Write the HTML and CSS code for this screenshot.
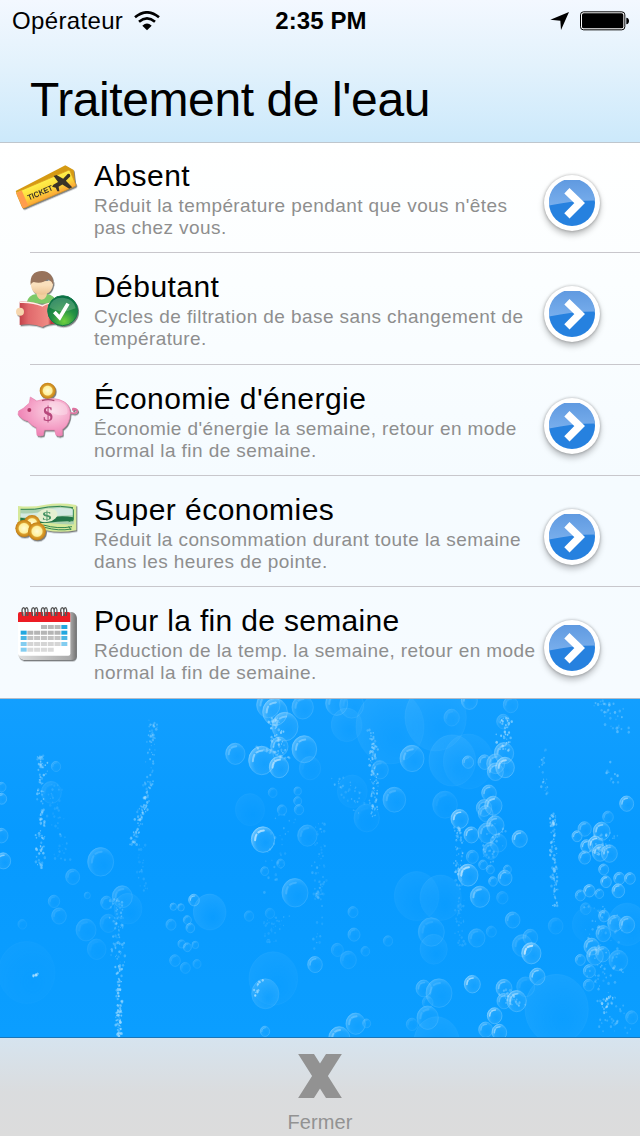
FILE: index.html
```html
<!DOCTYPE html>
<html lang="fr">
<head>
<meta charset="utf-8">
<title>Traitement de l'eau</title>
<link rel="stylesheet" href="styles.css">
</head>
<body>
<div class="screen">
  <header class="header">
    <div class="status">
      <div class="status-left">
        <span class="carrier">Opérateur</span>
        <svg class="wifi" width="26" height="20" viewBox="0 0 78 60">
          <path d="M3 19Q39-11 75 19" fill="none" stroke="#000" stroke-width="8"/>
          <path d="M15 32Q39 12 63 32" fill="none" stroke="#000" stroke-width="8"/>
          <path d="M25 44Q39 31 53 44L39 58Z"/>
        </svg>
      </div>
      <span class="clock">2:35 PM</span>
      <div class="status-right">
        <svg width="20" height="20" viewBox="0 0 60 60"><path d="M1 26L57 3L33 57L31 29Z"/></svg>
        <svg width="50" height="20" viewBox="0 0 150 60">
          <rect x="1.5" y="2.500" width="133" height="54" rx="9" fill="#fff" stroke="#000" stroke-width="3"/>
          <rect x="6" y="7" width="124" height="45" rx="5"/>
          <path d="M139 20Q147 21 147 30Q147 39 139 40Z"/>
        </svg>
      </div>
    </div>
    <h1 class="title">Traitement de l'eau</h1>
  </header>

  <main class="list">
    <section class="row row-first">
      <svg class="icon" viewBox="0 -6 282 330">
        <defs>
          <linearGradient id="gold" x1="0" x2="0" y1="0" y2="1"><stop offset="0" stop-color="#fff04c"/><stop offset=".55" stop-color="#fbd938"/><stop offset="1" stop-color="#fda438"/></linearGradient>
        </defs>
        <g class="shade">
          <path d="M47 138L196 61L221 75L225 110L72 190Z" fill="#d59a13"/>
          <g transform="rotate(-23 140 133)">
            <rect x="52" y="106" width="174" height="52" rx="4" fill="url(#gold)" stroke="#d99a1c" stroke-width="2"/>
            <path d="M52 107H70V157H52Z" fill="#ff9d4d"/>
            <text x="78" y="143" class="ticket-text" textLength="80" lengthAdjust="spacingAndGlyphs">TICKET</text>
            <path d="M164 128L180 126L175 104L184 105L198 123L216 115Q225 117 220 125L203 132L213 157L203 158L189 138L176 140L173 153L167 151L167 139L158 132Z" fill="#3b3327"/>
          </g>
        </g>
      </svg>
      <div class="copy"><h2>Absent</h2><p>Réduit la température pendant que vous n'êtes<br>pas chez vous.</p></div>
      <div class="go"><svg viewBox="0 0 45 45"><use href="#arrow"/></svg></div>
    </section>

    <section class="row row-tall">
      <svg class="icon" viewBox="0 -6 282 330">
        <defs>
          <radialGradient id="green" cx=".55" cy=".85" r=".8"><stop offset="0" stop-color="#6ed13f"/><stop offset=".5" stop-color="#249043"/><stop offset="1" stop-color="#087044"/></radialGradient>
          <linearGradient id="face" x1="0" x2="0" y1="0" y2="1"><stop offset=".3" stop-color="#fae0bd"/><stop offset="1" stop-color="#edc391"/></linearGradient>
          <linearGradient id="book"><stop offset="0" stop-color="#c34249"/><stop offset=".2" stop-color="#e0696c"/><stop offset=".65" stop-color="#f08b84"/><stop offset=".72" stop-color="#b8363f"/><stop offset="1" stop-color="#df6267"/></linearGradient>
        </defs>
        <g class="shade">
          <path d="M79 145Q84 119 110 117H140Q166 120 171 147Z" fill="#7dc968"/>
          <path d="M109 110H141Q142 131 125 134Q109 131 109 110Z" fill="#f2d0a0"/>
          <path d="M92 79Q91 119 124 119Q160 119 160 78Z" fill="url(#face)"/>
          <path d="M92 90Q88 49 126 48Q161 49 160 91Q155 78 144 72Q126 88 101 81Q94 82 92 90Z" fill="#98735b"/>
          <path d="M59 140Q99 138 126 152Q145 139 190 143V208Q150 203 127 216Q98 203 59 210Z" fill="url(#book)"/>
          <path d="M59 142Q98 140 127 153Q145 141 180 143" fill="none" stroke="#fff0eb" stroke-width="4"/>
          <circle cx="60" cy="170" r="12" fill="#f6d6ae"/>
          <circle cx="188" cy="167" r="45" fill="url(#green)" stroke="#147a4b" stroke-width="3"/>
          <path d="M148 157Q155 126 190 128Q224 133 227 160Q182 180 148 157Z" fill="#fff" opacity=".2"/>
          <path d="M163 171L179 188L204 146" fill="none" stroke="#fff" stroke-width="11"/>
        </g>
      </svg>
      <div class="copy"><h2>Débutant</h2><p>Cycles de filtration de base sans changement de<br>température.</p></div>
      <div class="go"><svg viewBox="0 0 45 45"><use href="#arrow"/></svg></div>
    </section>

    <section class="row">
      <svg class="icon" viewBox="0 0 282 330">
        <defs>
          <radialGradient id="pink" cx=".65" cy=".35" r=".65"><stop offset="0" stop-color="#fad6e5"/><stop offset=".6" stop-color="#f5a5c9"/><stop offset="1" stop-color="#ef83b5"/></radialGradient>
          <radialGradient id="coin"><stop offset="0" stop-color="#fffbd5"/><stop offset=".55" stop-color="#fff09c"/><stop offset=".68" stop-color="#dba02e"/><stop offset="1" stop-color="#c47e13"/></radialGradient>
        </defs>
        <g class="shade">
          <path d="M205 142Q229 150 232 139Q232 130 219 131Q217 136 223 137" fill="none" stroke="#df719f" stroke-width="5"/>
          <path d="M91 96L110 108Q163 92 194 111Q216 128 209 159Q203 184 187 193V211Q178 216 168 211L164 195H133L130 211Q120 215 111 211L109 188Q93 181 83 168Q65 164 54 149L56 138L70 130L88 114Z" fill="url(#pink)" stroke="#e986b0" stroke-width="2"/>
          <path d="M148 111Q174 104 195 119Q207 133 201 147Q174 158 148 137Z" fill="#fff" opacity=".28"/>
          <path d="M126 107Q144 101 163 107" stroke="#a7496f" stroke-width="4" fill="none"/>
          <circle cx="88" cy="135" r="6" fill="#b13764"/>
          <text x="129" y="168" class="pig-sign">$</text>
          <circle cx="143" cy="77" r="24" fill="url(#coin)"/>
        </g>
      </svg>
      <div class="copy"><h2>Économie d'énergie</h2><p>Économie d'énergie la semaine, retour en mode<br>normal la fin de semaine.</p></div>
      <div class="go"><svg viewBox="0 0 45 45"><use href="#arrow"/></svg></div>
    </section>

    <section class="row">
      <svg class="icon" viewBox="0 3 282 330">
        <g class="shade">
          <path d="M54 93Q95 98 136 89Q180 82 229 90V166Q179 175 137 166Q96 158 54 164Z" fill="#d6e99b"/>
          <path d="M61 101Q103 104 142 94Q181 88 219 96L222 148Q183 149 145 143Q101 132 61 143Z" fill="#acd1b0"/>
          <path d="M62 115Q107 119 150 101Q188 96 220 103V121Q180 119 145 128Q106 132 62 126Z" fill="#d4e9e1"/>
          <path d="M61 128Q104 136 144 129Q182 120 220 127V139Q180 137 145 143Q105 146 61 139Z" fill="#237547"/>
          <path d="M62 103Q105 106 145 96Q180 91 219 98M130 150Q174 163 216 155M134 157Q176 169 214 162M206 154L213 165M213 97L220 104V134L206 140" fill="none" stroke="#338650" stroke-width="3"/>
          <ellipse cx="141" cy="121" rx="32" ry="20" transform="rotate(-12 141 121)" fill="#e4f0d0"/>
          <text x="127" y="134" class="note-sign" textLength="28" lengthAdjust="spacingAndGlyphs">$</text>
          <circle cx="96" cy="145" r="25" fill="url(#coin)"/>
          <circle cx="72" cy="160" r="26" fill="url(#coin)"/>
          <circle cx="111" cy="169" r="27" fill="url(#coin)"/>
        </g>
      </svg>
      <div class="copy"><h2>Super économies</h2><p>Réduit la consommation durant toute la semaine<br>dans les heures de pointe.</p></div>
      <div class="go"><svg viewBox="0 0 45 45"><use href="#arrow"/></svg></div>
    </section>

    <section class="row row-last">
      <svg class="icon" viewBox="0 -3 282 330">
        <defs><linearGradient id="pad"><stop offset="0" stop-color="#ddd"/><stop offset=".9" stop-color="#aaa"/><stop offset="1" stop-color="#777"/></linearGradient></defs>
        <g class="shade">
          <path d="M55 94L215 72Q227 74 228 86V203Q227 215 214 216H70Q54 211 54 197Z" fill="url(#pad)"/>
          <rect x="54" y="72" width="157" height="131" rx="6" fill="#fff"/>
          <path d="M54 102V78Q54 72 60 72H205Q211 72 211 78V102Z" fill="#ec1c24"/>
        </g>
        <g fill="none" stroke="#fff" stroke-width="7">
          <path d="M74 64V84M103 64V84M132 64V84M161 64V84M190 64V84"/>
        </g>
        <g fill="none" stroke="#555" stroke-width="4">
          <path d="M69 84Q62 61 71 59Q77 60 75 84M78 84Q72 61 80 59Q86 60 83 84"/>
          <path d="M98 84Q91 61 100 59Q106 60 104 84M107 84Q101 61 109 59Q115 60 112 84"/>
          <path d="M127 84Q120 61 129 59Q135 60 133 84M136 84Q130 61 138 59Q144 60 141 84"/>
          <path d="M156 84Q149 61 158 59Q164 60 162 84M165 84Q159 61 167 59Q173 60 170 84"/>
          <path d="M185 84Q178 61 187 59Q193 60 191 84M194 84Q188 61 196 59Q202 60 199 84"/>
        </g>
        <g fill="none" stroke-width="12" stroke-dasharray="18 2.400">
          <path d="M123 117H183" stroke="#b9b9b9"/><path d="M184 117H202" stroke="#22a7df"/>
          <path d="M62 134H81" stroke="#22a7df"/><path d="M82 134H183" stroke="#b5b5b5"/><path d="M184 134H202" stroke="#22a7df"/>
          <path d="M62 150H81" stroke="#4ab6e4"/><path d="M82 150H183" stroke="#c2c2c2"/><path d="M184 150H202" stroke="#4ab6e4"/>
          <path d="M62 168H81" stroke="#83cdf0"/><path d="M82 168H183" stroke="#d5d5d5"/><path d="M184 168H202" stroke="#83cdf0"/>
          <path d="M62 185H81" stroke="#83cdf0"/><path d="M82 185H162" stroke="#dadada"/>
        </g>
      </svg>
      <div class="copy"><h2>Pour la fin de semaine</h2><p>Réduction de la temp. la semaine, retour en mode<br>normal la fin de semaine.</p></div>
      <div class="go"><svg viewBox="0 0 45 45"><use href="#arrow"/></svg></div>
    </section>
  </main>

  <svg class="water" viewBox="0 27 1920 1017" preserveAspectRatio="none">
    <defs>
      <radialGradient id="bubble" cx=".62" cy=".62" r=".66">
        <stop offset="0" stop-color="#6fc6ff" stop-opacity=".12"/>
        <stop offset=".6" stop-color="#7accff" stop-opacity=".25"/>
        <stop offset="1" stop-color="#b5e4ff" stop-opacity=".75"/>
      </radialGradient>
      <radialGradient id="haze" cx=".6" cy=".65" r=".7">
        <stop offset="0" stop-color="#58bcff" stop-opacity=".1"/>
        <stop offset="1" stop-color="#7accff" stop-opacity=".6"/>
      </radialGradient>
      <linearGradient id="rim" x1="0" y1="0" x2="1" y2="1">
        <stop offset="0" stop-color="#c9ebff"/>
        <stop offset=".5" stop-color="#8fd4ff" stop-opacity=".25"/>
        <stop offset="1" stop-color="#a8deff" stop-opacity=".65"/>
      </linearGradient>
      <linearGradient id="gloss" x1="0" x2="0" y1="0" y2="1"><stop offset="0" stop-color="#5f99e0"/><stop offset="1" stop-color="#78aeec"/></linearGradient>
      <g id="arrow">
        <circle cx="22.500" cy="22.500" r="22.500" fill="#2681df"/>
        <path d="M0 22.500A22.500 22.500 0 0 1 45 20Q22 20 0 25Z" fill="url(#gloss)"/>
        <path d="M17.500 10.500L30 22.500L17.500 35" fill="none" stroke="#fff" stroke-width="7.300"/>
      </g>
    </defs>
    <g id="bubbles"></g>
  </svg>

  <footer class="toolbar">
    <svg class="close" viewBox="0 0 46 46"><path d="M4-7L42 53M42-7L4 53" stroke="#929292" stroke-width="14"/></svg>
    <span>Fermer</span>
  </footer>
</div>
<script src="bubbles.js"></script>
</body>
</html>
```
FILE: styles.css
```css
* { box-sizing: border-box; }
body { margin: 0; font-family: "Liberation Sans", Arial, sans-serif; color: #000; }
svg { display: block; flex: none; }
.screen { width: 640px; height: 1136px; display: flex; flex-direction: column; overflow: hidden; background: #089bff; }
.header { height: 143px; border-bottom: 1px solid #bfc6cd; background: linear-gradient(#f3f8ff, #e3f2fc 45%, #cce9fb); }
.status { height: 40px; display: grid; grid-template-columns: 1fr auto 1fr; align-items: center; padding: 2px 10px 0 12px; font-size: 24px; line-height: 38px; }
.status-left { display: flex; align-items: center; gap: 11px; }
.carrier { letter-spacing: .35px; }
.wifi { margin-bottom: 1px; }
.clock { font-weight: bold; font-size: 24px; letter-spacing: .1px; }
.status-right { display: flex; justify-content: flex-end; align-items: center; gap: 10px; }
.title { margin: 0; padding: 32px 0 0 30px; font-size: 48px; line-height: 56px; font-weight: normal; letter-spacing: -.4px; }
.list { background: linear-gradient(#fff, #fbfeff 25%, #f5fbff 60%, #f6fbff); }
.row { height: 111px; display: flex; background: linear-gradient(#c8c7cc, #c8c7cc) 30px 100% / 610px 1px no-repeat; }
.row-first { height: 110px; }
.row-tall { height: 112px; }
.row-last { height: 112px; background: none; border-bottom: 1px solid #b4bcc8; }
.icon { width: 94px; height: 110px; }
.shade { filter: drop-shadow(3px 4px 2px rgba(0, 0, 0, .5)); }
.copy { width: 450px; padding-top: 17px; white-space: nowrap; }
.row-first .copy { padding-top: 16px; }
h2 { margin: 0 0 2px; font-size: 30px; line-height: 34px; font-weight: normal; letter-spacing: .45px; }
.row-last h2 { letter-spacing: .32px; }
p { margin: 0; font-size: 19px; line-height: 22px; letter-spacing: .42px; color: #8e8e8e; }
.go { width: 56px; height: 56px; margin: 33px 0 0; padding: 5px; border-radius: 50%; background: #fff; box-shadow: 0 0 3px rgba(0, 0, 0, .3), 0 4px 6px rgba(0, 0, 0, .25); }
.row-first .go { margin-top: 32px; }
.go svg { width: 46px; height: 46px; }
.ticket-text { font: bold 24px "Liberation Sans", sans-serif; fill: #3b3327; }
.pig-sign { font: bold 60px "Liberation Serif", serif; fill: #b7487c; }
.note-sign { font: bold 38px "Liberation Serif", serif; fill: #479465; }
.water { width: 640px; height: 338px; background: linear-gradient(#129fff, #079aff 40%, #0b9eff); }
.toolbar { flex: 1; border-top: 1px solid #1b76b8; display: flex; flex-direction: column; align-items: center; padding-top: 16px; background: linear-gradient(#d6e4ef, #dadcde 55%, #dcdcdc); color: #929292; font-size: 20px; line-height: 22px; letter-spacing: .1px; }
.close { width: 46px; height: 44px; margin-bottom: 13px; overflow: hidden; }
```
FILE: bubbles.js
```js
// Single bubbles: centre x, centre y, radius, opacity.
const bubbles = [
  [5,327,15,.7],[5,292,13,.5],[4,438,20,.6],[10,514,22,.8],[168,230,14,.4],[154,308,30,.25],
  [302,517,39,.45],[218,562,21,.4],[367,622,30,.45],[384,658,42,.35],[320,640,18,.4],[258,722,30,.3],
  [325,702,25,.25],[290,780,28,.2],[177,680,22,.35],[162,636,17,.35],[80,850,85,.15],[262,618,9,.3],[67,705,13,.2],
  [825,66,37,.8],[805,45,35,.6],[855,110,39,.7],[908,52,32,.5],[706,192,29,.6],[785,212,39,.8],[837,232,29,.9],
  [913,178,37,.7],[838,170,26,.7],[750,360,44,.25],[789,450,35,.95],[922,438,29,.4],[885,610,39,.5],[820,868,73,.3],
  [796,914,41,.9],[945,826,22,.6],[629,668,49,.55],[582,632,16,.8],[520,652,10,.5],[543,654,10,.5],[562,692,12,.5],
  [571,716,13,.5],[513,706,15,.4],[545,764,11,.4],[562,774,12,.5],[586,767,10,.4],[525,814,16,.35],[556,836,15,.3],
  [591,824,12,.3],[818,309,13,.3],[893,304,11,.4],[893,334,12,.4],[846,361,14,.4],[897,360,14,.4],[794,545,12,.4],
  [842,522,12,.4],[795,1027,14,.6],[747,680,14,.3],[810,672,14,.25],[930,235,32,.2],
  [1040,105,46,.4],[1010,40,33,.5],[1055,45,36,.3],[1170,110,102,.4],[1307,82,92,.45],[1355,83,23,.3],
  [1236,206,36,.6],[1357,212,70,.45],[1405,215,75,.3],[1140,240,25,.4],[1183,330,34,.5],[1057,305,45,.25],[1100,385,38,.2],[1335,345,37,.25],
  [1510,95,20,.4],[1408,32,24,.6],[1532,44,22,.4],[1404,217,17,.6],[1454,217,20,.6],[1487,222,27,.6],[1512,190,29,.7],[1515,233,28,.9],[1486,246,24,.7],
  [1467,310,22,.7],[1480,348,26,.8],[1457,372,22,.6],[1452,355,23,.6],[1379,388,26,.9],[1414,436,22,.8],[1559,448,23,.8],
  [1486,407,26,.7],[1462,430,28,.6],[1495,460,25,.4],[1472,484,23,.5],[1417,502,18,.5],[1404,557,30,.95],[1449,526,13,.5],
  [1471,540,12,.5],[1515,565,21,.7],[1522,540,12,.5],[1479,576,13,.6],[1440,622,29,.7],[1507,625,17,.3],
  [1250,620,67,.3],[1322,625,62,.35],[1294,728,39,.35],[1301,780,41,.4],[1059,668,15,.35],[1062,736,18,.4],[1164,755,14,.3],
  [1012,782,18,.3],[1096,786,13,.3],[1045,812,24,.3],[1430,746,25,.4],[1474,727,15,.3],[1538,692,22,.5],
  [1567,769,30,.4],[1594,792,29,1],[1591,744,22,.4],[1612,862,23,.8],[1417,885,24,.9],[1512,897,24,.7],[1550,936,29,.8],
  [1484,980,22,.9],[1512,936,21,.6],[1577,893,27,.3],[1670,960,95,.35],[1271,898,23,.5],[1317,912,39,.45],[1283,940,16,.3],
  [1283,986,32,.45],[1236,1006,17,.3],[1067,1004,29,.6],[1100,1003,12,.4],[1018,1048,32,.7],[1310,1058,68,.4],[1457,1022,21,.6],
  [1498,1030,22,.8],[1880,342,21,.8],[1824,382,16,.5],[1754,418,20,.6],[1731,440,15,.8],[1760,470,18,.8],
  [1805,425,25,.8],[1787,465,23,.9],[1800,490,23,.8],[1828,492,24,.7],[1754,504,18,.7],[1811,540,15,.7],[1818,577,16,.8],
  [1858,567,17,.7],[1890,567,16,.7],[1855,604,19,.8],[1768,604,17,.8],[1798,613,13,.6],[1741,618,15,.6],[1757,658,16,.3],
  [1812,680,16,.7],[1845,702,22,.6],[1881,706,23,.7],[1765,706,48,.2],[1882,705,58,.35],[1810,733,22,.6],[1775,772,23,.7],
  [1785,800,25,.7],[1741,812,15,.6],[1768,846,18,.6],[1808,795,21,.6],[1855,814,28,.4],[1667,710,22,.25],[1895,985,18,.4],[1766,888,16,.5]
];

// Streams of tiny bubbles: x0, y0, x1, y1, spread, count, opacity.
const streams = [
  [128,198,118,540,14,110,.6],[155,280,185,520,25,50,.2],[460,90,445,290,14,60,.4],[445,290,400,465,13,75,.55],
  [420,460,425,610,14,25,.2],[350,630,358,840,20,75,.4],[357,820,357,1044,10,95,.7],[825,80,840,190,20,45,.7],
  [770,170,860,205,15,35,.5],[850,360,820,610,32,35,.25],[950,500,955,780,15,40,.25],[840,680,800,760,35,35,.2],
  [780,872,762,930,8,12,.9],[92,866,113,852,6,10,.9],[1115,120,1125,210,12,28,.55],[1120,200,1120,380,12,55,.6],
  [1380,400,1376,560,14,55,.5],[1376,560,1380,770,13,55,.2],[1515,80,1515,185,22,42,.75],[1630,170,1630,320,10,24,.4],
  [1658,370,1665,650,10,95,.55],[1820,30,1860,130,40,35,.45],[1830,920,1815,960,15,18,.9],[1790,850,1850,1035,40,55,.35],
  [960,400,970,620,16,40,.2],[1500,400,1450,520,35,35,.4],[1820,430,1780,500,35,35,.5],[1800,650,1830,850,50,55,.4],
  [1820,190,1840,290,25,10,.5],[1020,255,1090,370,45,35,.3],[1510,900,1550,950,25,28,.5]
];

let seed = 17;
const random = () => (seed = seed * 16807 % 2147483647) / 2147483647;
const shapes = [];

for (const [x, y, r, o] of bubbles) {
  const large = r > 40;
  shapes.push(`<g opacity="${o * (large ? .6 : .85)}" transform="translate(${x} ${y})">
    <ellipse rx="${r}" ry="${r * 1.1}" fill="url(#${large ? "haze" : "bubble"})" stroke="url(#rim)" stroke-width="${large ? 1.5 : 3}"/>
    ${large ? "" : `<path d="M${-r * .68} ${r * .05}Q${-r * .65} ${-r * .75} ${r * .1} ${-r * .78}" fill="none" stroke="#d5f0ff" stroke-width="${Math.min(6, r * .2)}" stroke-linecap="round" stroke-dasharray="${r * .5} ${r * .25}" opacity="${o}"/>`}
  </g>`);
}

for (const [x0, y0, x1, y1, spread, count, o] of streams) {
  for (let i = 0; i < count; i++) {
    const t = random();
    const x = x0 + (x1 - x0) * t + (random() + random() - 1) * spread * 1.3;
    const y = y0 + (y1 - y0) * t;
    const r = 1.5 + random() * 2.5;
    shapes.push(`<ellipse cx="${x}" cy="${y}" rx="${r}" ry="${r * 1.2}" fill="#a9dfff" opacity="${o * (.4 + random() * .6)}"/>`);
  }
}

document.getElementById("bubbles").innerHTML = shapes.join("");
```
